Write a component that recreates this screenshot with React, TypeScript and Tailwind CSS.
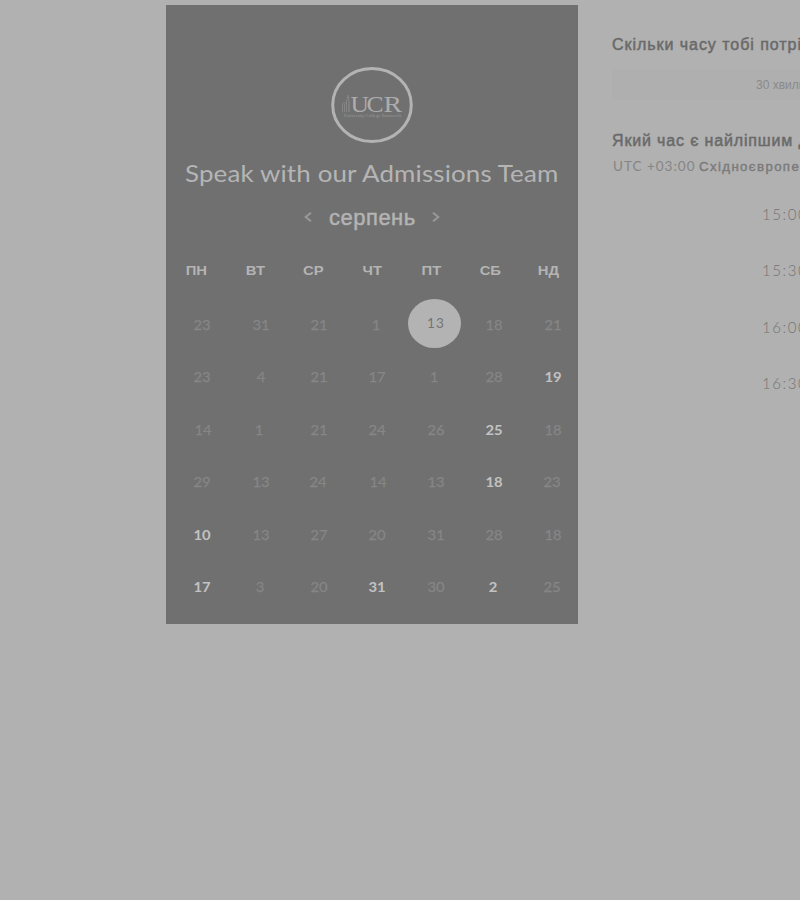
const weekdays = ['ПН', 'ВТ', 'СР', 'ЧТ', 'ПТ', 'СБ', 'НД'];

type Day = { n: number; open?: boolean; selected?: boolean; shift?: string };

const weeks: Day[][] = [
  [{ n: 23, shift: '-ml-px' }, { n: 31 }, { n: 21 }, { n: 1, shift: '-ml-[3px]' }, { n: 13, selected: true }, { n: 18 }, { n: 21 }],
  [{ n: 23, shift: '-ml-px' }, { n: 4 }, { n: 21 }, { n: 17 }, { n: 1, shift: '-ml-1' }, { n: 28 }, { n: 19, open: true }],
  [{ n: 14, shift: 'ml-0.5' }, { n: 1, shift: '-ml-[3px]' }, { n: 21 }, { n: 24 }, { n: 26 }, { n: 25, open: true, shift: '-ml-px' }, { n: 18 }],
  [{ n: 29 }, { n: 13 }, { n: 24, shift: '-ml-0.5' }, { n: 14, shift: 'ml-px' }, { n: 13 }, { n: 18, open: true }, { n: 23, shift: '-ml-0.5' }],
  [{ n: 10, open: true }, { n: 13 }, { n: 27 }, { n: 20 }, { n: 31 }, { n: 28 }, { n: 18 }],
  [{ n: 17, open: true }, { n: 3, shift: '-ml-0.5' }, { n: 20 }, { n: 31, open: true }, { n: 30 }, { n: 2, open: true, shift: '-ml-[3px]' }, { n: 25, shift: '-ml-0.5' }],
];

const times = ['15:00', '15:30', '16:00', '16:30'];

function Logo() {
  return (
    <svg width="84" height="78" viewBox="0 0 84 78" className="block">
      <ellipse cx="42" cy="39" rx="39.3" ry="36.6" fill="none" stroke="#b3b3b3" strokeWidth="3" />
      <g fill="none" stroke="#858585" strokeWidth="1">
        <path d="M12.5 46V38.5l2-2.5 2 2.5V46M16.5 34v12M17 34l1-5 1 5v12M14.5 38v8M19 36v10" />
      </g>
      <g fill="#adadad" fontSize="24" fontFamily="Liberation Serif, serif">
        <text x="20.5" y="46" textLength="18.5" lengthAdjust="spacingAndGlyphs">U</text>
        <text x="36.5" y="46" textLength="17" lengthAdjust="spacingAndGlyphs">C</text>
        <text x="53.5" y="46" textLength="18.5" lengthAdjust="spacingAndGlyphs">R</text>
      </g>
      <text x="14" y="51" textLength="57" lengthAdjust="spacingAndGlyphs" fill="#9a9a9a" fontSize="4.5" fontFamily="Liberation Serif, serif">University College Roosevelt</text>
    </svg>
  );
}

function Chevron({ right = false }: { right?: boolean }) {
  return (
    <svg width="8" height="10" viewBox="0 0 8 10" fill="none" stroke="#989898" strokeWidth="2" className="mb-[2px]">
      <path d={right ? 'M1 0.7 6.3 5 1 9.3' : 'M7 0.7 1.7 5 7 9.3'} />
    </svg>
  );
}

function DayCell({ day }: { day: Day }) {
  if (day.selected) {
    return (
      <div className="flex items-center justify-center">
        <span className="-ml-[2px] -mt-px flex h-[49px] w-[53px] shrink-0 items-center justify-center rounded-[50%] bg-[#b3b3b3] pb-[2px] pl-[2px] text-[13.5px] font-normal tracking-[1px] text-[#747474]">
          {day.n}
        </span>
      </div>
    );
  }
  return (
    <div className="flex items-center justify-center">
      <span
        className={`inline-block scale-x-[1.06] ${day.shift ?? ''} ${
          day.open ? 'font-bold text-[#c2c2c2]' : 'text-[#868686] [-webkit-text-stroke:0.25px_#868686]'
        }`}
      >
        {day.n}
      </span>
    </div>
  );
}

export default function App() {
  return (
    <div className="flex h-[900px] w-[800px] overflow-hidden bg-[#b1b1b1] font-['Lato','Liberation_Sans',sans-serif]">
      <main className="ml-[166px] mt-[4.5px] flex h-[619.5px] w-[412px] shrink-0 flex-col bg-[#707070]">
        <div className="mt-[61.5px] flex h-[78px] justify-center">
          <Logo />
        </div>
        <h1 className="ml-[19px] mt-[11px] h-9 origin-left scale-x-[1.08] whitespace-nowrap text-[24px] leading-[35px] tracking-[0.13px] text-[#b5b5b5]">
          Speak with our Admissions Team
        </h1>
        <div className="mt-[12px] flex h-[30px] items-center justify-center gap-[17px] font-['Liberation_Sans',sans-serif]">
          <Chevron />
          <span className="inline-block w-[86px] whitespace-nowrap text-[22px] leading-[30px] tracking-[0.5px] text-[#b4b4b4] [-webkit-text-stroke:0.45px_#b4b4b4]">
            серпень
          </span>
          <Chevron right />
        </div>
        <div className="ml-px mt-[28px] grid h-5 w-[411px] grid-cols-7 text-center font-['Liberation_Sans',sans-serif] text-[13px] font-bold leading-5 text-[#b4b4b4]">
          {weekdays.map((d) => (
            <span key={d} className="scale-x-[1.14]">
              {d}
            </span>
          ))}
        </div>
        <div className="ml-[7px] mt-[17px] grid w-[409px] auto-rows-[52.5px] grid-cols-7 text-[14px]">
          {weeks.flatMap((week, r) => week.map((day, c) => <DayCell key={`${r}-${c}`} day={day} />))}
        </div>
      </main>

      <aside className="ml-[34px] w-[404px] shrink-0 pt-[35px]">
        <h2 className="h-5 whitespace-nowrap font-['Liberation_Sans',sans-serif] text-[16px] leading-5 tracking-[0.95px] text-[#6a6a6a] [-webkit-text-stroke:0.5px_#6a6a6a]">
          Скільки часу тобі потрібно?
        </h2>
        <div className="mt-[14px] flex h-[31px] items-center bg-[#afafaf] pl-[144px] font-['Liberation_Sans',sans-serif] text-[12px] text-[#8a8a8a]">
          30 хвилин
        </div>
        <h2 className="mt-[31px] h-5 whitespace-nowrap font-['Liberation_Sans',sans-serif] text-[16px] leading-5 tracking-[0.85px] text-[#6a6a6a] [-webkit-text-stroke:0.5px_#6a6a6a]">
          Який час є найліпшим для тебе?
        </h2>
        <p className="ml-px mt-[5px] h-5 whitespace-nowrap text-[13.5px] leading-5 tracking-[1px] text-[#858585]">
          UTC +03:00{' '}
          <span className="-ml-px inline-block origin-left scale-x-[1.06] font-['Liberation_Sans',sans-serif] text-[12.5px] tracking-[1.3px] text-[#7a7a7a] [-webkit-text-stroke:0.4px_#7a7a7a]">
            Східноєвропейський час
          </span>
        </p>
        <ul className="mt-[10px] pl-[150px] text-[15px] font-light tracking-[1.6px] text-[#747474]">
          {times.map((t) => (
            <li key={t} className="flex h-[56.4px] items-center">
              {t}
            </li>
          ))}
        </ul>
      </aside>
    </div>
  );
}
